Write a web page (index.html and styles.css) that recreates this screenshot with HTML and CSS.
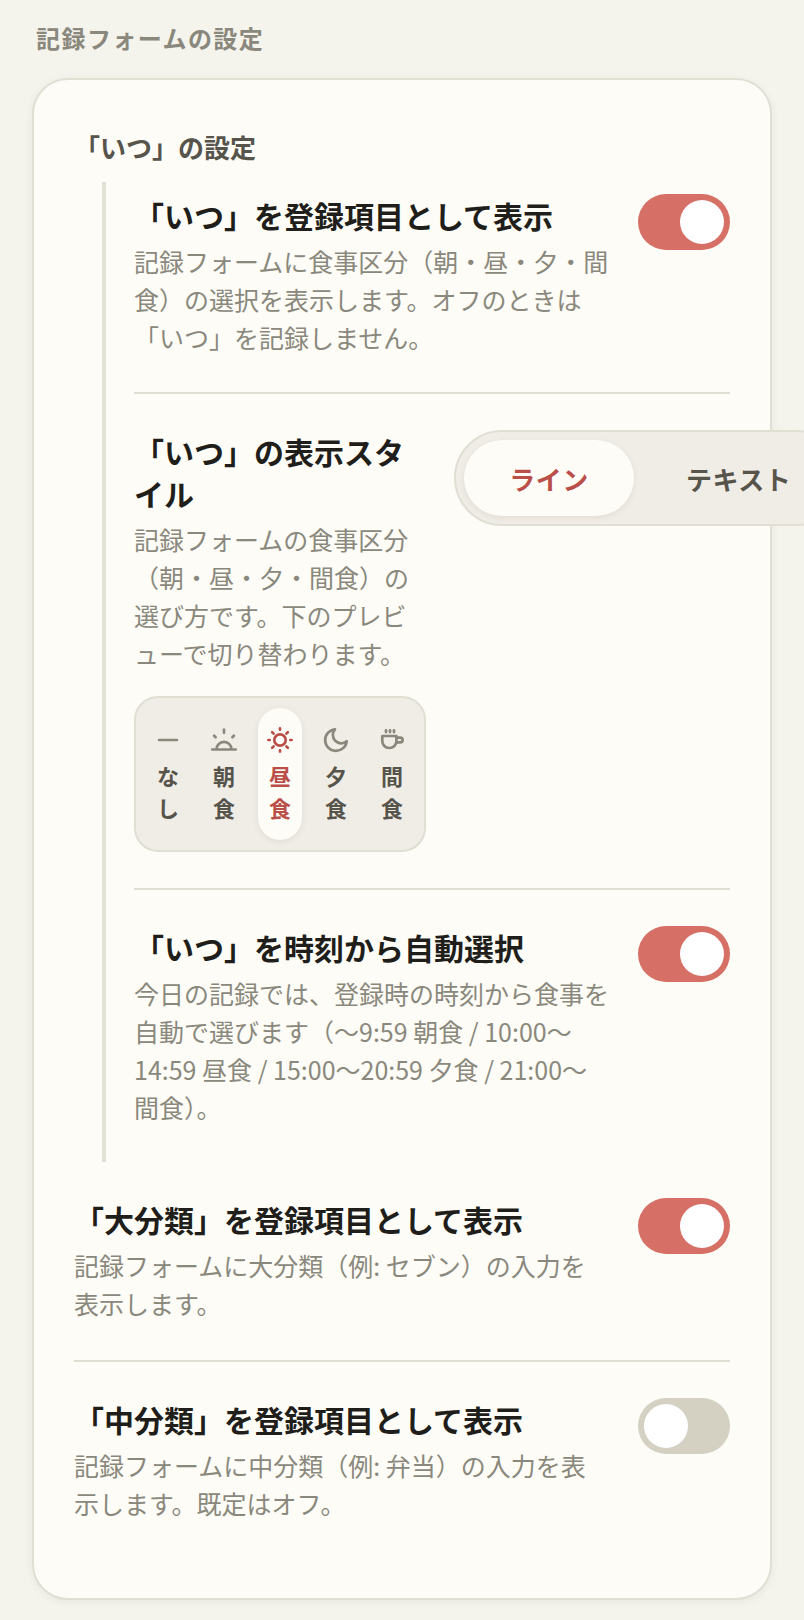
FILE: index.html
```
<!DOCTYPE html>
<html lang="ja">

<head>
  <meta charset="utf-8">
  <meta name="viewport" content="width=device-width, initial-scale=1">
  <title>記録フォームの設定</title>
  <link rel="stylesheet" href="styles.css">
</head>

<body>
  <main class="page">
    <h2 class="section-label">記録フォームの設定</h2>

    <section class="card">
      <h3 class="group-title">「いつ」の設定</h3>

      <div class="group">
        <div class="row">
          <div class="row-text">
            <label class="row-title" for="show-when">「いつ」を登録項目として表示</label>
            <p class="row-desc">記録フォームに食事区分（朝・昼・夕・間食）の選択を表示します。オフのときは「いつ」を記録しません。</p>
          </div>
          <input type="checkbox" class="toggle" id="show-when" checked>
        </div>

        <div class="row">
          <div class="row-text">
            <div class="row-title">「いつ」の表示スタイル</div>
            <p class="row-desc">記録フォームの食事区分（朝・昼・夕・間食）の選び方です。下のプレビューで切り替わります。</p>
            <div class="preview">
              <button type="button" class="meal">
                <svg class="icon" viewBox="0 0 28 28"><path d="M5 14h18" /></svg>
                なし
              </button>
              <button type="button" class="meal">
                <svg class="icon" viewBox="0 0 28 28">
                  <path d="M2.3 23.5h23.4M6.4 23.5a7.6 7.6 0 0 1 15.2 0M14 3.6v3.2M4.1 9.7l1.5 1.5M23.9 9.7l-1.5 1.5" />
                </svg>
                朝食
              </button>
              <button type="button" class="meal active">
                <svg class="icon" viewBox="0 0 28 28">
                  <circle cx="14" cy="14" r="5.7" />
                  <path d="M14 2.4v1.3M14 24.3v1.3M2.4 14h1.3M24.3 14h1.3M6.2 6.2l1.4 1.4M20.4 20.4l1.4 1.4M6.2 21.8l1.4-1.4M20.4 7.6l1.4-1.4" />
                </svg>
                昼食
              </button>
              <button type="button" class="meal">
                <svg class="icon" viewBox="0 0 28 28">
                  <path d="M24.7 15.3A10.8 10.8 0 1 1 13 3.3 8.4 8.4 0 0 0 24.7 15.3z" />
                </svg>
                夕食
              </button>
              <button type="button" class="meal">
                <svg class="icon" viewBox="0 0 28 28">
                  <path d="M4.3 10h14.1v5.2a6.8 6.8 0 0 1-6.8 6.8h-.5a6.8 6.8 0 0 1-6.8-6.8zM18.4 11.6h3.8a2.4 2.4 0 0 1 0 4.8h-4M8 4.3v1.8M12 4.3v1.8M16 4.3v1.8" />
                </svg>
                間食
              </button>
            </div>
          </div>
          <div class="segmented">
            <button type="button" class="segment active">ライン</button>
            <button type="button" class="segment">テキスト</button>
          </div>
        </div>

        <div class="row">
          <div class="row-text">
            <label class="row-title" for="auto-when">「いつ」を時刻から自動選択</label>
            <p class="row-desc">今日の記録では、登録時の時刻から食事を自動で選びます（〜9:59 朝食 / 10:00〜14:59 昼食 / 15:00〜20:59 夕食 / 21:00〜 間食）。</p>
          </div>
          <input type="checkbox" class="toggle" id="auto-when" checked>
        </div>
      </div>

      <div class="row">
        <div class="row-text">
          <label class="row-title" for="show-major">「大分類」を登録項目として表示</label>
          <p class="row-desc">記録フォームに大分類（例: セブン）の入力を表示します。</p>
        </div>
        <input type="checkbox" class="toggle" id="show-major" checked>
      </div>

      <div class="row">
        <div class="row-text">
          <label class="row-title" for="show-minor">「中分類」を登録項目として表示</label>
          <p class="row-desc">記録フォームに中分類（例: 弁当）の入力を表示します。既定はオフ。</p>
        </div>
        <input type="checkbox" class="toggle" id="show-minor">
      </div>
    </section>
  </main>
</body>

</html>
```
FILE: styles.css
```
* {
  box-sizing: border-box;
}

body {
  margin: 0;
  background-color: #F4F3EC;
  color: #1F1E1A;
  font-family: "Noto Sans CJK JP", sans-serif;
  overflow-x: hidden;
}

button {
  border: none;
  margin: 0;
  background: none;
  font-family: inherit;
}

.page {
  padding: 20px 32px;
}

.section-label {
  margin: 0 4px 22px;
  color: #8A887C;
  font-size: 24px;
  line-height: 36px;
  letter-spacing: 0.06em;
}

.card {
  padding: 40px 40px 38px;
  border: 2px solid #E0DFD3;
  border-radius: 36px;
  background-color: #FDFCF7;
  box-shadow: 0 2px 8px rgba(60, 55, 40, 0.06);
}

.group-title {
  margin: 0;
  padding: 7px 0 15px;
  color: #56544B;
  font-size: 26px;
  line-height: 40px;
}

.group {
  margin-left: 28px;
  padding-left: 28px;
  border-left: 4px solid #E2E1D4;
}

.row {
  display: flex;
  align-items: flex-start;
  gap: 28px;
  padding: 36px 0 38px;
  border-bottom: 2px solid #E0DFD3;
}

.group .row {
  padding-bottom: 36px;
}

.group .row:first-child {
  padding-top: 12px;
}

.row:last-child {
  border-bottom: none;
}

.row-text {
  flex: 1 1 0;
}

.row-title {
  display: block;
  font-size: 30px;
  font-weight: 700;
  line-height: 42px;
}

.row-desc {
  margin: 6px 0 0;
  color: #8A887C;
  font-size: 25px;
  line-height: 38px;
}

.toggle {
  appearance: none;
  flex: none;
  width: 92px;
  height: 56px;
  margin: 0;
  padding: 6px;
  border-radius: 28px;
  background-color: #D4D1C3;
}

.toggle::before {
  content: "";
  display: block;
  width: 44px;
  height: 44px;
  border-radius: 50%;
  background-color: #FFF;
}

.toggle:checked {
  background-color: #D66F65;
}

.toggle:checked::before {
  margin-left: auto;
}

.segmented {
  display: flex;
  flex: none;
  gap: 8px;
  padding: 8px;
  border: 2px solid #E0DFD3;
  border-radius: 48px;
  background-color: #F0EDE6;
}

.segment {
  min-width: 170px;
  height: 76px;
  padding: 0 44px;
  border-radius: 38px;
  color: #56544B;
  font-size: 26px;
  font-weight: 700;
  letter-spacing: 0.02em;
}

.preview {
  display: flex;
  justify-content: space-between;
  gap: 12px;
  margin-top: 24px;
  padding: 10px;
  border: 2px solid #E0DFD3;
  border-radius: 24px;
  background-color: #F0EDE6;
}

.meal {
  width: 44px;
  padding: 18px 10px 17px;
  border-radius: 22px;
  color: #56544B;
  font-size: 22px;
  font-weight: 700;
  line-height: 32px;
}

.icon {
  display: block;
  width: 28px;
  height: 28px;
  margin: 0 -2px 5px;
  fill: none;
  stroke: #8A887C;
  stroke-width: 2.7;
  stroke-linecap: round;
  stroke-linejoin: round;
}

.active {
  background-color: #FDFCF7;
  color: #B94F48;
  box-shadow: 0 2px 6px rgba(60, 55, 40, 0.08);
}

.active .icon {
  stroke: #B94F48;
}
```
